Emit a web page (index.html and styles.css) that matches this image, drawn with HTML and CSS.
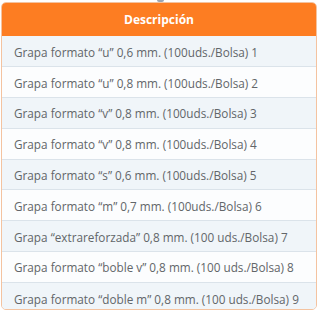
FILE: index.html
```html
<!DOCTYPE html>
<html lang="es">
<head>
<meta charset="utf-8">
<link rel="stylesheet" href="styles.css">
</head>
<body>
<div class="tip"></div>
<div class="wrap">
  <table class="list">
    <thead>
      <tr><th>Descripción</th></tr>
    </thead>
    <tbody>
      <tr><td>Grapa formato “u” 0,6 mm. (100uds./Bolsa) 1</td></tr>
      <tr><td>Grapa formato “u” 0,8 mm. (100uds./Bolsa) 2</td></tr>
      <tr><td>Grapa formato “v” 0,8 mm. (100uds./Bolsa) 3</td></tr>
      <tr><td>Grapa formato “v” 0,8 mm. (100uds./Bolsa) 4</td></tr>
      <tr><td>Grapa formato “s” 0,6 mm. (100uds./Bolsa) 5</td></tr>
      <tr><td>Grapa formato “m” 0,7 mm. (100uds./Bolsa) 6</td></tr>
      <tr><td>Grapa “extrareforzada” 0,8 mm. (100 uds./Bolsa) 7</td></tr>
      <tr><td>Grapa formato “boble v” 0,8 mm. (100 uds./Bolsa) 8</td></tr>
      <tr><td>Grapa formato “doble m” 0,8 mm. (100 uds./Bolsa) 9</td></tr>
    </tbody>
  </table>
</div>
</body>
</html>
```
FILE: styles.css
```css
html, body {
  margin: 0;
  padding: 0;
  background: #ffffff;
}
body {
  position: relative;
  width: 320px;
  height: 314px;
  overflow: hidden;
  font-family: "Open Sans", "Liberation Sans", sans-serif;
}
.tip {
  position: absolute;
  left: 157px;
  top: 0;
  width: 7px;
  height: 2px;
  background: #9aa6b4;
  border-radius: 0 0 2px 2px;
}
.wrap {
  margin: 2px 3px 0 1px;
  height: 308px;
  box-sizing: border-box;
  border: 1px solid #f4c3a0;
  border-radius: 5px;
  overflow: hidden;
  background: #f1f5f9;
}
.list {
  width: 100%;
  border-collapse: collapse;
  border-spacing: 0;
}
.list th {
  height: 33px;
  padding: 0;
  background: #fd7d22;
  color: #ffffff;
  font-weight: 700;
  font-size: 12px;
  line-height: 16px;
  text-align: center;
  vertical-align: middle;
}
.list td {
  box-sizing: border-box;
  height: 30.8px;
  padding: 1px 0 0 12px;
  font-size: 11.75px;
  line-height: 16px;
  color: #626669;
  text-align: left;
  vertical-align: middle;
  border-top: 1px solid #dbe3ea;
  white-space: nowrap;
}
.list tbody tr:nth-child(odd) td {
  background: #f0f5f9;
}
.list tbody tr:nth-child(even) td {
  background: #fcfdfe;
}
.list tbody tr:first-child td {
  border-top: 0;
}
```
